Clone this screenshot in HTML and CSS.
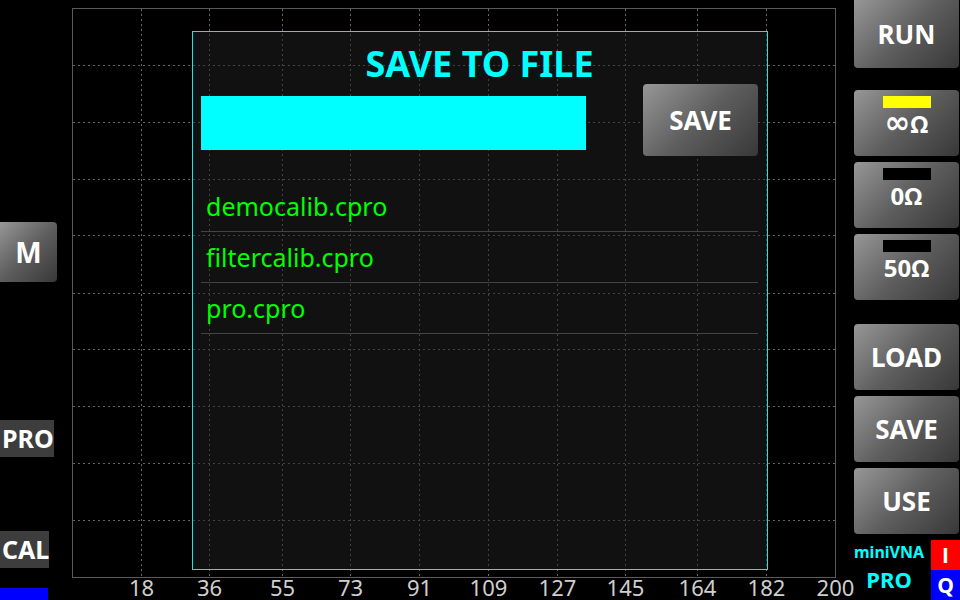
FILE: index.html
```html
<!DOCTYPE html>
<html lang="en">
<head>
    <meta charset="UTF-8">
    <title>miniVNA PRO</title>
    <link rel="stylesheet" href="styles.css">
</head>
<body>
    <div class="screen">
        <aside class="side-left">
            <button class="btn btn-m">M</button>
            <div class="tag tag-pro">PRO</div>
            <div class="tag tag-cal">CAL</div>
            <div class="blue-bar"></div>
        </aside>

        <main class="plot">
            <svg class="chart" width="782" height="600" viewBox="0 0 782 600">
                <g class="grid">
                    <line x1="69.5" y1="9" x2="69.5" y2="577"/>
                    <line x1="137.5" y1="9" x2="137.5" y2="577"/>
                    <line x1="210.5" y1="9" x2="210.5" y2="577"/>
                    <line x1="278.5" y1="9" x2="278.5" y2="577"/>
                    <line x1="347.5" y1="9" x2="347.5" y2="577"/>
                    <line x1="416.5" y1="9" x2="416.5" y2="577"/>
                    <line x1="485.5" y1="9" x2="485.5" y2="577"/>
                    <line x1="553.5" y1="9" x2="553.5" y2="577"/>
                    <line x1="625.5" y1="9" x2="625.5" y2="577"/>
                    <line x1="694.5" y1="9" x2="694.5" y2="577"/>
                    <line x1="1" y1="65.5" x2="763" y2="65.5"/>
                    <line x1="1" y1="122.5" x2="763" y2="122.5"/>
                    <line x1="1" y1="179.5" x2="763" y2="179.5"/>
                    <line x1="1" y1="235.5" x2="763" y2="235.5"/>
                    <line x1="1" y1="293.5" x2="763" y2="293.5"/>
                    <line x1="1" y1="349.5" x2="763" y2="349.5"/>
                    <line x1="1" y1="406.5" x2="763" y2="406.5"/>
                    <line x1="1" y1="463.5" x2="763" y2="463.5"/>
                    <line x1="1" y1="520.5" x2="763" y2="520.5"/>
                </g>
                <rect class="frame" x="0.5" y="8.5" width="763" height="569"/>
                <g class="ticks">
                    <text x="69.5" y="596">18</text>
                    <text x="137.5" y="596">36</text>
                    <text x="210.5" y="596">55</text>
                    <text x="278.5" y="596">73</text>
                    <text x="347.5" y="596">91</text>
                    <text x="416.5" y="596">109</text>
                    <text x="485.5" y="596">127</text>
                    <text x="553.5" y="596">145</text>
                    <text x="625.5" y="596">164</text>
                    <text x="694.5" y="596">182</text>
                    <text x="763.5" y="596">200</text>
                </g>
            </svg>

            <div class="dialog">
                <div class="dialog-title">SAVE TO FILE</div>
                <div class="dialog-row">
                    <input class="file-name" type="text">
                    <button class="btn btn-save">SAVE</button>
                </div>
                <ul class="file-list">
                    <li>democalib.cpro</li>
                    <li>filtercalib.cpro</li>
                    <li>pro.cpro</li>
                </ul>
            </div>
        </main>

        <aside class="side-right">
            <button class="btn btn-run">RUN</button>
            <button class="btn cal-btn"><span class="cal-mark on"></span><span><span class="inf">∞</span>Ω</span></button>
            <button class="btn cal-btn"><span class="cal-mark"></span>0Ω</button>
            <button class="btn cal-btn"><span class="cal-mark"></span>50Ω</button>
            <button class="btn btn-load">LOAD</button>
            <button class="btn">SAVE</button>
            <button class="btn">USE</button>
            <div class="brand">
                <div class="brand-name">
                    <span class="mini">miniVNA</span>
                    <span class="pro">PRO</span>
                </div>
                <div class="iq">
                    <span class="i">I</span>
                    <span class="q">Q</span>
                </div>
            </div>
        </aside>
    </div>
</body>
</html>
```

FILE: styles.css
```css
body {
    margin: 0;
    background-color: #000;
    font-family: "Noto Sans", "Open Sans", sans-serif;
    color: #fff;
}

.screen {
    display: flex;
    width: 960px;
    height: 600px;
    overflow: hidden;
}

/* shared grey gradient button */
.btn {
    display: flex;
    align-items: center;
    justify-content: center;
    padding: 0;
    border: none;
    border-radius: 4px;
    background: linear-gradient(135deg, #979797 0%, #5e5e5e 50%, #383838 100%);
    color: #fff;
    font-family: inherit;
    font-size: 26px;
    font-weight: bold;
}

/* left column */
.side-left {
    width: 72px;
    flex: none;
    display: flex;
    flex-direction: column;
    align-items: flex-start;
}

.btn-m {
    width: 57px;
    height: 60px;
    margin-top: 222px;
    font-size: 28px;
    border-radius: 0 4px 4px 0;
}

.tag {
    height: 37px;
    padding: 0 0 0 2px;
    background-color: #3d3d3d;
    font-size: 25px;
    font-weight: bold;
    line-height: 37px;
}

.tag-pro {
    margin-top: 138px;
}

.tag-cal {
    margin-top: 74px;
}

.blue-bar {
    width: 48px;
    height: 12px;
    margin-top: 20px;
    background-color: #0000ff;
}

/* plot */
.plot {
    position: relative;
    width: 782px;
    flex: none;
}

.chart {
    display: block;
}

.grid line {
    stroke: #666;
    stroke-width: 1;
    stroke-dasharray: 2 3;
}

.frame {
    fill: none;
    stroke: #5a5a5a;
    stroke-width: 1;
}

.ticks text {
    fill: #cfcfcf;
    font-size: 22px;
    text-anchor: middle;
}

/* save dialog */
.dialog {
    position: absolute;
    left: 120px;
    top: 31px;
    width: 576px;
    height: 539px;
    box-sizing: border-box;
    padding: 0 9px 0 8px;
    border: 1px solid #22e2e2;
    background-color: rgba(33, 33, 33, 0.52);
}

.dialog-title {
    margin-top: 12px;
    color: #00ffff;
    font-size: 36px;
    font-weight: bold;
    line-height: 40px;
    text-align: center;
}

.dialog-row {
    display: flex;
    justify-content: space-between;
    align-items: flex-start;
}

.file-name {
    width: 385px;
    height: 54px;
    margin: 12px 0 0;
    padding: 0;
    border: none;
    background-color: #00ffff;
}

.btn-save {
    width: 115px;
    height: 72px;
}

.file-list {
    list-style: none;
    margin: 25px 0 0;
    padding: 0;
}

.file-list li {
    height: 50px;
    padding-left: 5px;
    border-bottom: 1px solid #444;
    color: #00ff00;
    font-size: 25px;
    line-height: 50px;
}

/* right column */
.side-right {
    width: 106px;
    flex: none;
    display: flex;
    flex-direction: column;
    gap: 6px;
}

.side-right .btn {
    width: 105px;
    height: 66px;
    flex: none;
}

.side-right .btn-run {
    height: 68px;
    margin-bottom: 16px;
    border-radius: 0 0 4px 4px;
}

.side-right .btn-load {
    margin-top: 18px;
}

.cal-btn {
    flex-direction: column;
    justify-content: flex-start;
    padding-top: 6px;
    box-sizing: border-box;
    font-size: 24px;
    line-height: 32px;
}

.cal-mark {
    width: 48px;
    height: 12px;
    background-color: #000;
}

.cal-mark.on {
    background-color: #ffff00;
}

.inf {
    font-family: "DejaVu Sans", sans-serif;
    font-size: 31px;
    line-height: 0;
}

.brand {
    display: flex;
    flex: 1;
}

.brand-name {
    flex: 1;
    display: flex;
    flex-direction: column;
    align-items: center;
    padding-right: 7px;
    color: #00ffff;
    font-weight: bold;
}

.brand-name .mini {
    padding-top: 1px;
    font-size: 16px;
    line-height: 22px;
}

.brand-name .pro {
    font-size: 22px;
    line-height: 32px;
}

.iq {
    width: 29px;
    display: flex;
    flex-direction: column;
}

.iq span {
    height: 30px;
    display: flex;
    align-items: center;
    justify-content: center;
    font-family: "Open Sans", sans-serif;
    font-size: 21px;
    font-weight: bold;
}

.iq .i {
    background-color: #ff0000;
}

.iq .q {
    background-color: #0000ff;
}
```
